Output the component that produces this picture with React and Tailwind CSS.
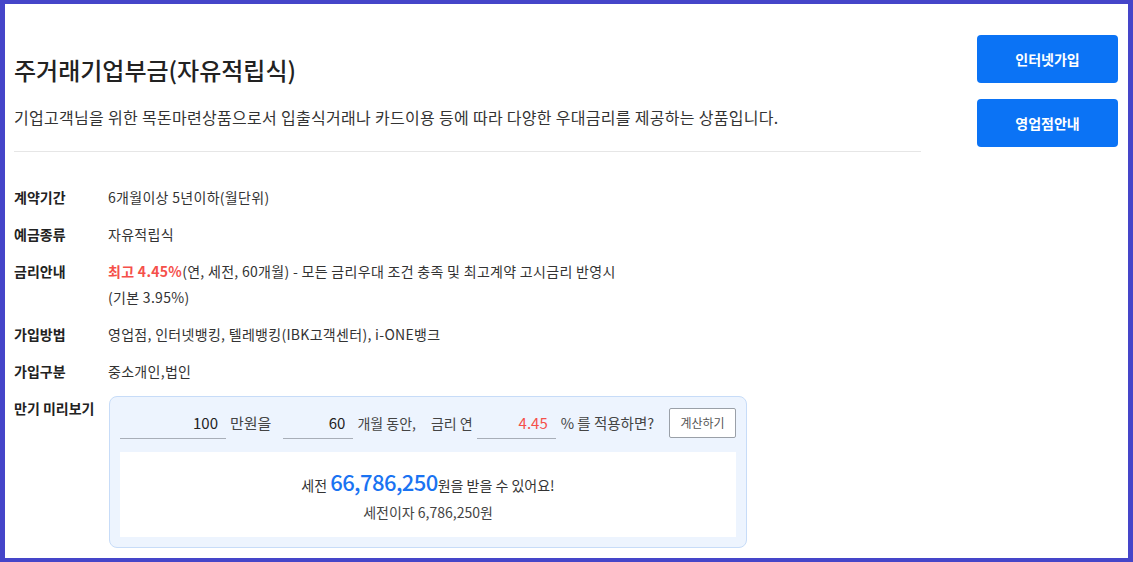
const rows = [
  { label: '계약기간', value: '6개월이상 5년이하(월단위)' },
  { label: '예금종류', value: '자유적립식' },
  { label: '금리안내', value: 'rate' },
  { label: '가입방법', value: '영업점, 인터넷뱅킹, 텔레뱅킹(IBK고객센터), i-ONE뱅크' },
  { label: '가입구분', value: '중소개인,법인' },
];

function Field({ value, width, red }) {
  return (
    <input
      readOnly
      value={value}
      className={`h-[32px] bg-transparent border-b border-[#a8aeb8] text-right pr-[8px] text-[15px] outline-none ${width} ${red ? 'text-[#f5504a]' : 'text-[#222]'}`}
    />
  );
}

export default function App() {
  return (
    <div
      className="h-[562px] w-[1133px] bg-white border-x-[5px] border-t-4 border-b-[4px] border-[#4545c9] flex text-[#333]"
      style={{ fontFamily: '"Noto Sans CJK KR", "Noto Sans", sans-serif' }}
    >
      <div className="w-[907px] ml-[9px] pt-[50px]">
        <h1 className="text-[24px] leading-[32px] font-medium text-[#222]">주거래기업부금(자유적립식)</h1>
        <p className="mt-[19px] text-[16px] leading-[24px] tracking-[0.3px] text-[#333]">
          기업고객님을 위한 목돈마련상품으로서 입출식거래나 카드이용 등에 따라 다양한 우대금리를 제공하는 상품입니다.
        </p>
        <div className="mt-[22px] border-t border-[#e6e6e6]" />

        <div className="pt-[32px] flex flex-col gap-[11px] text-[14px] leading-[26px]">
          {rows.map((r) => (
            <div key={r.label} className="flex">
              <div className="w-[94px] font-bold text-[#222]">{r.label}</div>
              <div className="tracking-[0.3px]">
                {r.value === 'rate' ? (
                  <>
                    <div>
                      <span className="text-[#f5504a] font-bold">최고 4.45%</span>
                      (연, 세전, 60개월) - 모든 금리우대 조건 충족 및 최고계약 고시금리 반영시
                    </div>
                    <div>(기본 3.95%)</div>
                  </>
                ) : (
                  r.value
                )}
              </div>
            </div>
          ))}

          <div className="flex">
            <div className="w-[95px] font-bold text-[#222] whitespace-nowrap">만기 미리보기</div>
            <div className="mt-[1px] w-[638px] h-[152px] rounded-[8px] border border-[#c7dcf8] bg-[#edf4fe] p-[10px]">
              <div className="flex items-center h-[32px] text-[14px] text-[#444]">
                <Field value="100" width="w-[106px]" />
                <span className="ml-[4px] text-[15px]">만원을</span>
                <span className="ml-[12px]" />
                <Field value="60" width="w-[70px]" />
                <span className="ml-[4px]">개월 동안,</span>
                <span className="ml-[15px]">금리 연</span>
                <span className="ml-[4px]" />
                <Field value="4.45" width="w-[79px]" red />
                <span className="ml-[5px] text-[14.5px]">% 를 적용하면?</span>
                <button className="ml-auto h-[30px] w-[67px] bg-white border border-[#9aa0a8] rounded-[2px] text-[12px] text-[#555]">
                  계산하기
                </button>
              </div>
              <div className="mt-[13px] h-[85px] bg-white flex flex-col items-center justify-center">
                <div className="flex items-baseline text-[14px] text-[#333] leading-[30px]">
                  <span>세전&nbsp;</span>
                  <span className="text-[22px] tracking-[-0.6px] text-[#1a73f2] font-medium">66,786,250</span>
                  <span>원을 받을 수 있어요!</span>
                </div>
                <div className="text-[14px] text-[#444] leading-[24px]">세전이자 6,786,250원</div>
              </div>
            </div>
          </div>
        </div>
      </div>

      <div className="ml-auto mr-[10px] pt-[31px] flex flex-col gap-[16px]">
        <button className="w-[141px] h-[48px] rounded-[4px] bg-[#0b73f5] text-white font-bold text-[14px]">인터넷가입</button>
        <button className="w-[141px] h-[48px] rounded-[4px] bg-[#0b73f5] text-white font-bold text-[14px]">영업점안내</button>
      </div>
    </div>
  );
}
